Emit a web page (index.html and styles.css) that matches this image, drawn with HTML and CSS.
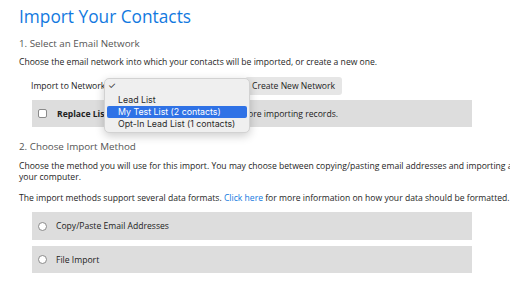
FILE: index.html
```html
<!DOCTYPE html>
<html lang="en">
<head>
    <meta charset="UTF-8">
    <meta name="viewport" content="width=device-width, initial-scale=1.0">
    <title>Import Your Contacts</title>
    <link rel="stylesheet" href="styles.css">
</head>
<body>
    <div class="page">
        <h1 class="title">Import Your Contacts</h1>

        <h2 class="step">1. Select an Email Network</h2>
        <p class="text">Choose the email network into which your contacts will be imported, or create a new one.</p>

        <div class="network-row">
            <label class="network-label">Import to Network</label>
            <div class="select-wrap">
                <ul class="select-menu">
                    <li class="checked">&#10003;</li>
                    <li>Lead List</li>
                    <li class="active">My Test List (2 contacts)</li>
                    <li>Opt-In Lead List (1 contacts)</li>
                </ul>
            </div>
            <button class="btn">Create New Network</button>
        </div>

        <div class="option-box replace-box">
            <span class="checkbox"></span>
            <span class="replace-label">Replace List</span>
            <span class="replace-text">Remove all existing contacts before importing records.</span>
        </div>

        <h2 class="step step-two">2. Choose Import Method</h2>
        <p class="text">Choose the method you will use for this import. You may choose between copying/pasting email addresses and importing a file from your computer.</p>
        <p class="text text-last">The import methods support several data formats. <a href="#" class="link">Click here</a> for more information on how your data should be formatted.</p>

        <div class="option-box method">
            <span class="radio"></span>
            <span>Copy/Paste Email Addresses</span>
        </div>
        <div class="option-box method method-file">
            <span class="radio"></span>
            <span>File Import</span>
        </div>
    </div>
</body>
</html>
```

FILE: styles.css
```css
html, body {
    margin: 0;
    padding: 0;
    overflow: hidden;
}
body {
    font-family: "Open Sans", "Noto Sans", sans-serif;
    color: #222;
    background-color: #fff;
}
.page {
    width: 550px;
    padding: 0 0 0 19px;
}
.title {
    font-size: 17.3px;
    font-weight: 400;
    color: #1279e0;
    margin: 4px 0 0 0;
    line-height: 26px;
}
.step {
    font-size: 9.8px;
    font-weight: 400;
    color: #555;
    margin: 7px 0 0 0;
    line-height: 14px;
}
.step-two {
    margin-top: 13px;
}
.text {
    font-size: 8.6px;
    line-height: 11px;
    margin: 6px 0 0 0;
    color: #1e1e1e;
}
.step-two + .text {
    margin-top: 7px;
}
.text-last {
    margin-top: 10px;
}
.link {
    color: #1279e0;
    text-decoration: none;
}
.network-row {
    display: flex;
    align-items: center;
    margin-top: 9px;
    padding-left: 12px;
    height: 18px;
    font-size: 8.6px;
}
.network-label {
    width: 73px;
    white-space: nowrap;
}
.select-wrap {
    position: relative;
    width: 141px;
    height: 18px;
    flex-shrink: 0;
}
.select-menu {
    position: absolute;
    top: 1px;
    left: 0;
    z-index: 2;
    width: 146px;
    margin: 0;
    padding: 1px 2px 2px 2px;
    box-sizing: border-box;
    list-style: none;
    background-color: #efefef;
    border: 1px solid #d2d2d2;
    border-radius: 5px;
    box-shadow: 0 3px 10px rgba(0, 0, 0, 0.2);
    font-family: "Inter", "Open Sans", sans-serif;
    font-size: 8.8px;
    color: #2a2a2a;
}
.select-menu li {
    height: 12px;
    line-height: 12px;
    padding-left: 11px;
    border-radius: 2px;
    white-space: nowrap;
}
.select-menu li.checked {
    height: 14px;
    padding-left: 1px;
    font-size: 9px;
}
.select-menu li.active {
    background-color: #2f72e6;
    color: #fff;
}
.btn {
    height: 18px;
    padding: 0 7px;
    border: none;
    border-radius: 3px;
    background-color: #e6e6e6;
    font-family: "Open Sans", sans-serif;
    font-size: 8.6px;
    color: #222;
    white-space: nowrap;
}
.option-box {
    display: flex;
    align-items: center;
    width: 440px;
    margin-left: 13px;
    background-color: #dddddd;
    font-size: 8.6px;
    white-space: nowrap;
}
.replace-box {
    margin-top: 5px;
    height: 27px;
}
.checkbox {
    width: 7px;
    height: 7px;
    margin: 0 10px 0 6px;
    border: 1px solid #8a8a8a;
    border-radius: 2px;
    background-color: #fff;
    flex-shrink: 0;
}
.replace-label {
    font-weight: 700;
    margin-right: 12px;
}
.method {
    height: 28px;
    margin-top: 8px;
}
.method-file {
    height: 27px;
    margin-top: 6px;
}
.radio {
    width: 7px;
    height: 7px;
    margin: 0 9px 0 6px;
    border: 1px solid #8a8a8a;
    border-radius: 50%;
    background-color: #fff;
    flex-shrink: 0;
}
```
